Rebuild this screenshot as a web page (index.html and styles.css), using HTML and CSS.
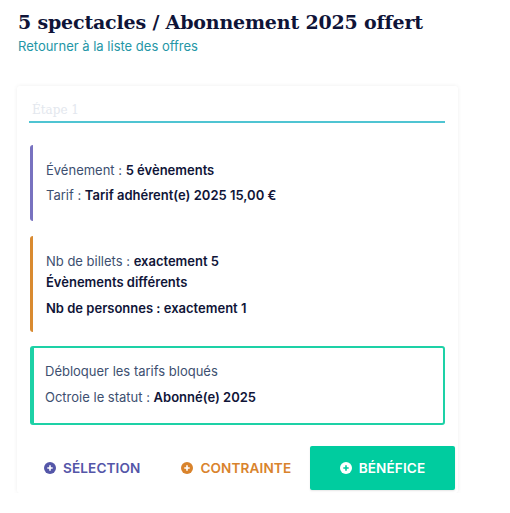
FILE: index.html
```html
<!DOCTYPE html>
<html lang="fr">
<head>
<meta charset="utf-8">
<link rel="stylesheet" href="styles.css">
</head>
<body>
<div class="page">
  <h1 class="title">5 spectacles / Abonnement 2025 offert</h1>
  <a class="back" href="#">Retourner à la liste des offres</a>
  <div class="card">
    <div class="step">Étape 1</div>
    <div class="block block-sel">
      <p class="line"><span class="lbl">Événement : </span><b>5 évènements</b></p>
      <p class="line"><span class="lbl">Tarif : </span><b>Tarif adhérent(e) 2025 15,00 €</b></p>
    </div>
    <div class="block block-con">
      <p class="line tight"><span class="lbl">Nb de billets : </span><b>exactement 5</b></p>
      <p class="line tight"><b>Évènements différents</b></p>
      <p class="line spaced"><b>Nb de personnes : exactement 1</b></p>
    </div>
    <div class="block block-ben">
      <p class="line"><span class="lbl">Débloquer les tarifs bloqués</span></p>
      <p class="line"><span class="lbl">Octroie le statut : </span><b>Abonné(e) 2025</b></p>
    </div>
    <div class="actions">
      <button class="btn btn-sel"><svg class="ico" viewBox="0 0 12 12"><circle cx="6" cy="6" r="6" fill="currentColor"/><path d="M6 3.3v5.4M3.3 6h5.4" stroke="#fff" stroke-width="1.6"/></svg>SÉLECTION</button>
      <button class="btn btn-con"><svg class="ico" viewBox="0 0 12 12"><circle cx="6" cy="6" r="6" fill="currentColor"/><path d="M6 3.3v5.4M3.3 6h5.4" stroke="#fff" stroke-width="1.6"/></svg>CONTRAINTE</button>
      <button class="btn btn-ben"><svg class="ico" viewBox="0 0 12 12"><circle cx="6" cy="6" r="6" fill="#fff"/><path d="M6 3.3v5.4M3.3 6h5.4" stroke="#00cc9f" stroke-width="1.6"/></svg>BÉNÉFICE</button>
    </div>
  </div>
</div>
</body>
</html>
```

FILE: styles.css
```css
html, body {
  margin: 0;
  padding: 0;
  background: #ffffff;
}
.page {
  padding: 9px 52px 0 17px;
  font-family: "Inter", "Liberation Sans", sans-serif;
  color: #13193a;
}
.title {
  margin: 0 0 0 1px;
  font-family: "DejaVu Serif", serif;
  font-weight: bold;
  font-size: 19px;
  line-height: 26px;
  color: #0f1438;
  letter-spacing: -0.18px;
}
.back {
  display: block;
  margin: 3px 0 0 1px;
  font-size: 13px;
  line-height: 16px;
  color: #2496a6;
  text-decoration: none;
}
.card {
  margin-top: 32px;
  background: #fff;
  border-radius: 3px;
  box-shadow: 0 0 4px rgba(0, 0, 0, 0.07);
  padding: 14px 3px 3px 12px;
}
.step {
  font-family: "DejaVu Serif", serif;
  font-size: 12px;
  line-height: 21px;
  color: #e3e7ee;
  padding: 0 0 0 3px;
  margin-right: 10px;
  border-bottom: 2px solid #4fc4d2;
}
.block {
  margin: 0 10px 0 1px;
  border-left: 3px solid;
  border-radius: 3px;
  background: #fff;
}
.block-sel {
  margin-top: 22px;
  border-color: #7872c0;
  padding: 13px 10px 13px 13px;
}
.block-con {
  margin-top: 15px;
  border-color: #d98a30;
  padding: 15px 10px 11px 13px;
}
.block-ben {
  margin-top: 14px;
  border: 2px solid #1dd1a6;
  border-left-width: 4px;
  padding: 11px 10px 13px 11px;
}
.line {
  margin: 0;
  font-size: 13px;
  line-height: 25px;
}
.line.tight {
  line-height: 21px;
}
.line.spaced {
  margin-top: 3px;
}
.block-ben .line + .line {
  margin-top: 1px;
}
.lbl {
  color: #3d4f70;
}
.line b {
  font-weight: 600;
  color: #101538;
}
.actions {
  display: flex;
  align-items: center;
  margin-top: 21px;
  height: 44px;
}
.btn {
  display: flex;
  align-items: center;
  gap: 7px;
  border: 0;
  background: none;
  font-family: "Inter", "Liberation Sans", sans-serif;
  font-size: 13.6px;
  font-weight: 600;
  letter-spacing: 0.1px;
  padding: 0;
  cursor: pointer;
}
.ico {
  width: 12px;
  height: 12px;
  flex: none;
}
.btn-sel {
  color: #5456a8;
  margin-left: 15px;
}
.btn-con {
  color: #d9832c;
  margin-left: 41px;
}
.btn-ben {
  color: #fff;
  background: #00cc9f;
  height: 44px;
  width: 145px;
  justify-content: center;
  margin-left: auto;
  border-radius: 2px;
  box-shadow: 0 1px 2px rgba(0, 0, 0, 0.1);
}
```
